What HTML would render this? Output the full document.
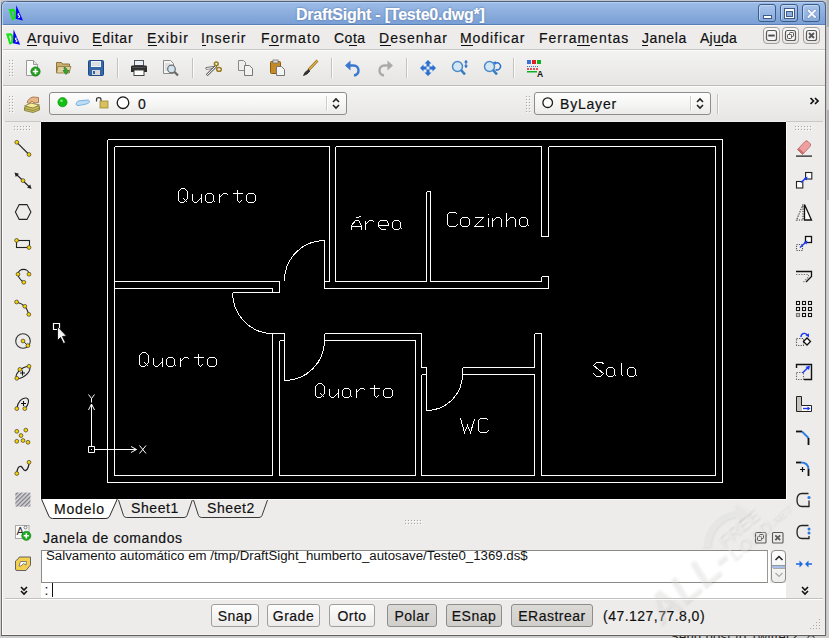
<!DOCTYPE html>
<html><head><meta charset="utf-8">
<style>
*{margin:0;padding:0;box-sizing:border-box}
html,body{width:829px;height:638px;overflow:hidden;background:#9a9a9a;font-family:"Liberation Sans",sans-serif;position:relative}
.a{position:absolute}
.ui{position:absolute;font-size:14px;letter-spacing:0.6px;color:#101010;white-space:nowrap;line-height:16px;-webkit-text-stroke:0.18px currentColor}
.ul{position:absolute;height:1px;background:#101010}
.tb{position:absolute;width:1px;background:#c4c2bf;box-shadow:1px 0 0 #fafafa}
svg{position:absolute;overflow:visible}
.wb{width:18px;height:18px;border:1px solid #3e5b88;border-radius:3px;background:linear-gradient(#a9c5ec,#86a9dc);box-shadow:inset 1px 1px 0 #c2d6f3}
.combo{border:1px solid #8e8c88;border-radius:3px;background:linear-gradient(#fefefe,#f4f4f3 60%,#ebebea)}
.sb{height:23px;padding-top:1px;border:1px solid #a19f9b;border-radius:3px;background:linear-gradient(#fdfdfd,#ecebea);font-size:14px;letter-spacing:0.5px;color:#111;text-align:center;line-height:21px;white-space:nowrap;-webkit-text-stroke:0.18px #111}
.sb.on{background:linear-gradient(#dcdad7,#d0cecb);border-color:#8f8d89}
.mdi{width:17px;height:17px;border:1px solid #9c9a96;border-radius:3px;background:linear-gradient(#fdfdfd,#e3e2e0)}
</style></head><body>
<!-- desktop bits -->
<div class="a" style="left:0;top:0;width:829px;height:2px;background:#c2c6cc"></div>
<div class="a" style="left:0;top:0;width:1px;height:638px;background:#d0d0d0"></div>
<div class="a" style="left:826px;top:0;width:3px;height:638px;background:#d0d0d0"></div>
<div class="a" style="left:826px;top:0;width:3px;height:27px;background:#a9b1bd"></div>
<div class="a" style="left:826px;top:110px;width:3px;height:90px;background:#b0b0b0"></div>
<div class="a" style="left:826px;top:0;width:1px;height:638px;background:#c4c4c4"></div>
<div class="a" style="left:0;top:635px;width:829px;height:3px;background:#cdcdcd"></div>
<div class="a" style="left:670px;top:629px;font-size:13px;line-height:16px;color:#222;white-space:nowrap;letter-spacing:0.3px">Send post to Twitter?</div><div class="a" style="left:807px;top:635px;width:8px;height:8px;border-radius:50%;border:1px solid #333"></div>
<!-- window frame -->
<div class="a" style="left:1px;top:1px;width:825px;height:635px;background:#edeceb;border-left:1px solid #6e6b68;border-right:1px solid #6e6b68;border-bottom:1px solid #625f5c;border-radius:5px 5px 0 0;box-shadow:inset 1px 0 0 #fdfdfd, inset 0 -1px 0 #f6f5f4"></div>
<!-- title bar -->
<div class="a" style="left:1px;top:1px;width:825px;height:24px;border-radius:5px 5px 0 0;box-shadow:inset 1px 0 0 #4b6184,inset -1px 0 0 #4b6184,inset 2px 0 0 #b6cff2;background:linear-gradient(#4b6184 0,#4b6184 1px,#b6cff2 1px,#b6cff2 2px,#9cbbe6 2px,#7a9fd5 23px,#5a7fb6 23px,#5a7fb6 24px)"></div>
<div class="ui" style="left:296px;top:7px;font-weight:bold;font-size:16px;letter-spacing:-0.22px;color:#fff;text-shadow:0 0 2px #3e5f90">DraftSight - [Teste0.dwg*]</div>


<!-- DS logo title -->
<svg style="left:7px;top:4px" width="18" height="18" viewBox="0 0 18 18">
<path d="M9.3 1.2L16 16.6L8.4 14.8Z" fill="#0808f4"/>
<path d="M1.6 5.2L6.2 4.8Q8.6 5.2 8.8 9L8.6 14.6L5.2 16.4Z" fill="#14e414"/>
<path d="M4.6 7.4L6 7.2Q6.9 7.8 6.9 9.8L6.7 13.2L6.2 13.6Z" fill="#7f9fd0"/>
<path d="M12.2 9.8c-1.3 -0.2 -1.6 1.3 -0.4 1.7c1.3 0.4 1 2.1 -0.6 1.9" stroke="#fff" stroke-width="1.1" fill="none"/>
</svg>
<!-- window buttons -->
<div class="a wb" style="left:758px;top:4px"><div class="a" style="left:4px;top:10px;width:9px;height:4px;background:#fff;border:1px solid #3e5b88"></div></div>
<div class="a wb" style="left:780px;top:4px"><div class="a" style="left:3px;top:3px;width:11px;height:11px;border:1px solid #3e5b88;background:#fff"><div class="a" style="left:1px;top:2px;width:7px;height:6px;background:#8aaedf;border:1px solid #3e5b88"></div></div></div>
<div class="a wb" style="left:802px;top:4px"><svg style="left:0;top:0" width="18" height="18" viewBox="0 0 18 18"><path d="M5.5 5.5L12 12M12 5.5L5.5 12" stroke="#6f8fc0" stroke-width="3.4" stroke-linecap="round"/><path d="M5.5 5.5L12 12M12 5.5L5.5 12" stroke="#f2f5fb" stroke-width="2.2" stroke-linecap="round"/></svg></div>
<!-- DS logo menu -->
<svg style="left:5px;top:29px" width="18" height="18" viewBox="0 0 18 18">
<path d="M8.6 0.6L15.2 15.8L7.8 14.2Z" fill="#0808f4"/>
<path d="M1 4.6L5.6 4.2Q8 4.6 8.2 8.4L8 14L4.6 15.8Z" fill="#14e414"/>
<path d="M4 6.8L5.4 6.6Q6.3 7.2 6.3 9.2L6.1 12.6L5.6 13Z" fill="#e4e4e0"/>
<path d="M11.6 9.2c-1.3 -0.2 -1.6 1.3 -0.4 1.7c1.3 0.4 1 2.1 -0.6 1.9" stroke="#fff" stroke-width="1.1" fill="none"/>
</svg>
<!-- MDI buttons -->
<svg style="left:763px;top:27px" width="60" height="18" viewBox="0 0 60 18">
<defs><linearGradient id="mg" x1="0" y1="0" x2="0" y2="1"><stop offset="0" stop-color="#fdfdfd"/><stop offset="1" stop-color="#e6e5e3"/></linearGradient></defs>
<g transform="translate(0,0)"><rect x="0.5" y="0.5" width="16" height="16" rx="3.5" fill="url(#mg)" stroke="#a19f9b"/><rect x="3.5" y="3.5" width="10" height="10" rx="2" fill="#f6f6f6" stroke="#5c5a58" stroke-width="1.2"/><rect x="5.3" y="7.6" width="6.4" height="1.9" fill="#4a4a4a"/></g>
<g transform="translate(19,0)"><rect x="0.5" y="0.5" width="16" height="16" rx="3.5" fill="url(#mg)" stroke="#a19f9b"/><rect x="3.5" y="3.5" width="10" height="10" rx="2" fill="#f6f6f6" stroke="#5c5a58" stroke-width="1.2"/><rect x="7.5" y="5.5" width="4" height="4" rx="0.8" fill="none" stroke="#555" stroke-width="1"/><rect x="5.5" y="7.5" width="4" height="4" rx="0.8" fill="#f6f6f6" stroke="#555" stroke-width="1"/></g>
<g transform="translate(40,0)"><rect x="0.5" y="0.5" width="16" height="16" rx="3.5" fill="url(#mg)" stroke="#a19f9b"/><rect x="3.5" y="3.5" width="10" height="10" rx="2" fill="#f6f6f6" stroke="#5c5a58" stroke-width="1.2"/><path d="M6 6L11 11M11 6L6 11" stroke="#555" stroke-width="1.9"/></g>
</svg>
<!-- menu bar -->
<div class="a" style="left:3px;top:25px;width:822px;height:1px;background:#f7f6f4"></div>
<div class="a" style="left:3px;top:49px;width:822px;height:1px;background:#c9c7c3"></div>

<div class="ui" style="left:27px;top:30px;letter-spacing:0.77px">Arquivo</div><div class="ul" style="left:27px;top:45px;width:10px"></div>
<div class="ui" style="left:92px;top:30px;letter-spacing:0.8px">Editar</div><div class="ul" style="left:93px;top:45px;width:9px"></div>
<div class="ui" style="left:147px;top:30px;letter-spacing:1.2px">Exibir</div><div class="ul" style="left:148px;top:45px;width:9px"></div>
<div class="ui" style="left:201px;top:30px;letter-spacing:0.93px">Inserir</div><div class="ul" style="left:202px;top:45px;width:4px"></div>
<div class="ui" style="left:261px;top:30px;letter-spacing:1.1px">Formato</div><div class="ul" style="left:269px;top:45px;width:10px"></div>
<div class="ui" style="left:334px;top:30px;letter-spacing:0.5px">Cota</div><div class="ul" style="left:349px;top:45px;width:8px"></div>
<div class="ui" style="left:379px;top:30px;letter-spacing:1.03px">Desenhar</div><div class="ul" style="left:380px;top:45px;width:11px"></div>
<div class="ui" style="left:460px;top:30px;letter-spacing:0.94px">Modificar</div><div class="ul" style="left:461px;top:45px;width:12px"></div>
<div class="ui" style="left:539px;top:30px;letter-spacing:1.0px">Ferramentas</div><div class="ul" style="left:577px;top:45px;width:13px"></div>
<div class="ui" style="left:642px;top:30px;letter-spacing:0.6px">Janela</div><div class="ul" style="left:642px;top:45px;width:6px"></div>
<div class="ui" style="left:700px;top:30px;letter-spacing:0.25px">Ajuda</div><div class="ul" style="left:715px;top:45px;width:8px"></div>

<!-- toolbar 1 -->
<div class="a" style="left:3px;top:50px;width:822px;height:36px;background:linear-gradient(#fbfbfb 0,#fbfbfb 1px,#f3f3f2 1px,#e6e5e3 35px,#bebcb9 35px)"></div>

<!-- toolbar1 grip -->

<!-- new -->
<svg style="left:24px;top:59px" width="18" height="18" viewBox="0 0 18 18">
<path d="M2.5 1.5H9.5L13.5 5.5V16.5H2.5Z" fill="#fafafa" stroke="#9a9a9a"/><path d="M9.5 1.5V5.5H13.5" fill="#e0e0e0" stroke="#9a9a9a"/>
<circle cx="11.5" cy="12.5" r="4.6" fill="#22a022" stroke="#0f7a0f" stroke-width="0.8"/><path d="M11.5 9.8V15.2M8.8 12.5H14.2" stroke="#fff" stroke-width="1.7"/></svg>
<!-- open -->
<svg style="left:55px;top:59px" width="18" height="18" viewBox="0 0 18 18">
<path d="M1.5 3.5H6.5L7.5 5H14.5V13.5H1.5Z" fill="#c9b073" stroke="#8e7437"/><path d="M3 7.5H16L14 14H1.5Z" fill="#e2d0a0" stroke="#8e7437" stroke-width="0.8"/>
<path d="M9 8.5C11 8.5 12 9.5 12 11.5H14L11 15.5L8 11.5H10C10 10.5 9.5 10 9 10Z" fill="#3aa63a" stroke="#1d7a1d" stroke-width="0.7"/></svg>
<!-- save -->
<svg style="left:87px;top:59px" width="18" height="18" viewBox="0 0 18 18">
<rect x="1.5" y="1.5" width="15" height="15" rx="1" fill="#3466a8" stroke="#1f4a82"/><rect x="4" y="2" width="10" height="6" fill="#f0f0f0"/><path d="M5 4H13M5 6H13" stroke="#b8c4d4" stroke-width="0.8"/><rect x="5" y="11" width="8" height="5" fill="#d8d8d8"/><rect x="6" y="12" width="2" height="3" fill="#3466a8"/></svg>
<div class="tb" style="left:117px;top:58px;height:20px"></div>
<!-- print -->
<svg style="left:130px;top:59px" width="18" height="18" viewBox="0 0 18 18">
<rect x="4.5" y="1.5" width="9" height="5" fill="#e8eef8" stroke="#555"/><path d="M2 6.5H16Q17 6.5 17 8V13H1V8Q1 6.5 2 6.5Z" fill="#2c2c2c"/><rect x="4" y="11" width="10" height="5.5" fill="#fff" stroke="#444"/><rect x="2.5" y="8" width="13" height="1" fill="#555"/></svg>
<!-- preview -->
<svg style="left:162px;top:59px" width="18" height="18" viewBox="0 0 18 18">
<path d="M1.5 1.5H8.5L11.5 4.5V14.5H1.5Z" fill="#f5f5f5" stroke="#8a8a8a"/><path d="M3 5H8M3 7H7M3 9H6M3 11H6" stroke="#bbb" stroke-width="0.8"/>
<circle cx="9.5" cy="10" r="3.8" fill="#cfe4ef" stroke="#6a6a6a" stroke-width="1.2"/><path d="M12.3 12.8L16 16.5" stroke="#666" stroke-width="2.2"/></svg>
<div class="tb" style="left:192px;top:58px;height:20px"></div>
<!-- cut -->
<svg style="left:205px;top:59px" width="18" height="18" viewBox="0 0 18 18">
<path d="M1.8 9.3L8.6 8.6" stroke="#444" stroke-width="2.6" stroke-linecap="round"/><path d="M1.8 9.3L8.6 8.6" stroke="#fafafa" stroke-width="1.3" stroke-linecap="round"/>
<path d="M2.6 15.4L10.8 7.4" stroke="#333" stroke-width="2.6" stroke-linecap="round"/><path d="M2.6 15.4L10.8 7.4" stroke="#fafafa" stroke-width="1.2" stroke-linecap="round"/>
<circle cx="11.3" cy="4.8" r="1.9" fill="none" stroke="#9a7b1e" stroke-width="1.5"/><ellipse cx="14" cy="10.4" rx="2.3" ry="1.8" fill="none" stroke="#9a7b1e" stroke-width="1.5"/></svg>
<!-- copy -->
<svg style="left:237px;top:59px" width="18" height="18" viewBox="0 0 18 18">
<path d="M1.5 1.5H6.5L8.5 3.5V11.5H1.5Z" fill="#eee" stroke="#888"/><path d="M7.5 6.5H12.5L15.5 9.5V16.5H7.5Z" fill="#f2f2f2" stroke="#777"/></svg>
<!-- paste -->
<svg style="left:269px;top:59px" width="18" height="18" viewBox="0 0 18 18">
<rect x="1.5" y="2.5" width="10" height="12" rx="1" fill="#c48a28" stroke="#8a5a10"/><rect x="4" y="1" width="5" height="3" fill="#ddd" stroke="#777" stroke-width="0.8"/><path d="M7.5 7.5H12.5L15.5 10.5V16.5H7.5Z" fill="#f4f4f4" stroke="#777"/></svg>
<!-- brush -->
<svg style="left:302px;top:59px" width="18" height="18" viewBox="0 0 18 18">
<path d="M15.5 1.5L6.5 11" stroke="#8a6a1a" stroke-width="2.6"/><path d="M15.5 1.5L6.5 11" stroke="#e6b64a" stroke-width="1.2"/><path d="M6.8 10.2L3 13.5L1.5 16.5L5 15L8 12" fill="#333" stroke="#222" stroke-width="0.8"/></svg>
<div class="tb" style="left:331px;top:58px;height:20px"></div>
<!-- undo -->
<svg style="left:344px;top:59px" width="18" height="18" viewBox="0 0 18 18">
<path d="M5 6.5H9.5C13 6.5 14.5 9 14.5 11.5C14.5 14 12.5 16 10 16.5" stroke="#3a78d0" stroke-width="2.4" fill="none"/><path d="M1 6.5L6.5 1.5V11.5Z" fill="#3a78d0"/></svg>
<!-- redo -->
<svg style="left:376px;top:59px" width="18" height="18" viewBox="0 0 18 18">
<path d="M13 6.5H8.5C5 6.5 3.5 9 3.5 11.5C3.5 14 5.5 16 8 16.5" stroke="#aaa" stroke-width="2.4" fill="none"/><path d="M17 6.5L11.5 1.5V11.5Z" fill="#aaa"/></svg>
<div class="tb" style="left:406px;top:58px;height:20px"></div>
<!-- pan -->
<svg style="left:419px;top:59px" width="18" height="18" viewBox="0 0 18 18">
<path d="M9 1L12.5 4.5H10.5V7.5H13.5V5.5L17 9L13.5 12.5V10.5H10.5V13.5H12.5L9 17L5.5 13.5H7.5V10.5H4.5V12.5L1 9L4.5 5.5V7.5H7.5V4.5H5.5Z" fill="#2a6fd0"/><rect x="7.5" y="7.5" width="3" height="3" fill="#d8e6f6"/></svg>
<!-- zoom -->
<svg style="left:451px;top:59px" width="18" height="18" viewBox="0 0 18 18">
<circle cx="6.5" cy="7.5" r="5" fill="#d4e6f4" stroke="#4b8cc8" stroke-width="1.5"/><path d="M10 11L14 15.5" stroke="#3a7ac0" stroke-width="2.6"/><path d="M15 1.5V8.5" stroke="#2a6fd0" stroke-width="1.2"/><path d="M13 3.5L15 1L17 3.5ZM13 6.5L15 9L17 6.5Z" fill="#2a6fd0"/></svg>
<!-- zoom prev -->
<svg style="left:483px;top:59px" width="18" height="18" viewBox="0 0 18 18">
<circle cx="6.5" cy="7.5" r="5" fill="#d4e6f4" stroke="#4b8cc8" stroke-width="1.5"/><path d="M10 11L14 15.5" stroke="#3a7ac0" stroke-width="2.6"/><path d="M12 4.5A3.5 3.5 0 1 1 12.5 10.5" stroke="#2a6fd0" stroke-width="1.4" fill="none"/><path d="M10 3L13 2.5L12.5 6Z" fill="#2a6fd0"/></svg>
<div class="tb" style="left:513px;top:58px;height:20px"></div>
<!-- layer styles -->
<svg style="left:526px;top:59px" width="18" height="18" viewBox="0 0 18 18">
<rect x="1" y="1" width="4" height="4" fill="#3a70d8"/><rect x="6" y="1" width="4" height="4" fill="#e02020"/><rect x="11" y="1" width="4" height="4" fill="#10b020"/>
<path d="M1 7.5H12" stroke="#3a70d8" stroke-width="1" stroke-dasharray="1 1"/><path d="M1 10H12" stroke="#e02020" stroke-width="1.3" stroke-dasharray="2 1"/><rect x="1" y="12" width="10" height="1.5" fill="#10b020"/>
<text x="11" y="17.5" font-family="Liberation Sans" font-weight="bold" font-size="8.5" fill="#111">A</text></svg>

<!-- toolbar 2 -->
<div class="a" style="left:3px;top:86px;width:822px;height:36px;background:linear-gradient(#fbfbfb 0,#fbfbfb 1px,#f3f3f2 1px,#e7e6e4 35px,#eeedeb 35px)"></div>


<!-- toolbar2 grip -->

<!-- layer manager icon -->
<svg style="left:23px;top:95px" width="18" height="18" viewBox="0 0 18 18">
<path d="M1.5 12.5L8 9.5L16.5 11.5V15L10 17.5L1.5 15.5Z" fill="#c8c060" stroke="#7a7030" stroke-width="0.8"/><path d="M1.5 11L8 8L16.5 10L10 13L1.5 11Z" fill="#f4ec9a" stroke="#7a7030" stroke-width="0.8"/><path d="M1.5 13.5L10 15.5L16.5 13" stroke="#7a7030" stroke-width="0.7" fill="none"/>
<path d="M4 7.5C5 5 7 2.5 10 2L15.5 2.5V7.5L11 8L9 6L6 8.5Z" fill="#e8b888" stroke="#a06838" stroke-width="0.8"/></svg>
<!-- layer combo -->
<div class="a combo" style="left:49px;top:92px;width:298px;height:23px"></div>
<div class="a" style="left:326px;top:96px;width:1px;height:15px;background:#cfcdca;box-shadow:1px 0 0 #fff"></div>
<svg style="left:331px;top:97px" width="10" height="13" viewBox="0 0 10 13"><path d="M2 5L5 2L8 5M2 8L5 11L8 8" stroke="#222" stroke-width="1.6" fill="none"/></svg>
<svg style="left:55px;top:94px" width="90" height="18" viewBox="0 0 90 18">
<circle cx="7.5" cy="8.2" r="4.6" fill="#10c010" stroke="#0a8a0a" stroke-width="0.6"/><circle cx="6.5" cy="6.8" r="1.4" fill="#9fef9f" opacity="0.8"/>
<path d="M21.5 8.5C22.5 6.5 25 6.8 28 6.5C31 6.2 34 5.5 34.5 7C35 9 32 10 29 10.5C26 11 22 12.5 21 10.5Z" fill="#bcdcf4" stroke="#6aaae0" stroke-width="0.9"/>
<path d="M41.5 7.5V5.5C41.5 3 46 3 46 5.5V7.5" stroke="#333" stroke-width="1.2" fill="none"/><rect x="45" y="7" width="8" height="7" fill="#d8c060" stroke="#9a8a30" stroke-width="0.8"/>
<circle cx="68" cy="8.7" r="5.8" fill="#fff" stroke="#1a1a1a" stroke-width="1.3"/></svg>
<div class="ui" style="left:138px;top:96px">0</div>
<!-- second grip -->

<div class="a combo" style="left:534px;top:92px;width:177px;height:23px"></div>
<div class="a" style="left:690px;top:96px;width:1px;height:15px;background:#cfcdca;box-shadow:1px 0 0 #fff"></div>
<svg style="left:695px;top:97px" width="10" height="13" viewBox="0 0 10 13"><path d="M2 5L5 2L8 5M2 8L5 11L8 8" stroke="#222" stroke-width="1.6" fill="none"/></svg>
<svg style="left:540px;top:95px" width="16" height="16"><circle cx="7.7" cy="7.7" r="4.8" fill="#fff" stroke="#1a1a1a" stroke-width="1.3"/></svg>
<div class="ui" style="left:560px;top:96px;letter-spacing:0.8px">ByLayer</div>
<div class="tb" style="left:717px;top:94px;height:20px"></div>
<svg style="left:809px;top:95px" width="12" height="12" viewBox="0 0 12 12"><path d="M1.5 3L4.5 6L1.5 9M6 3L9 6L6 9" stroke="#111" stroke-width="1.7" fill="none"/></svg>

<!-- drawing area -->
<div class="a" style="left:40px;top:122px;width:747px;height:378px;background:#fbfbfb"></div>
<div class="a" style="left:5px;top:121px;width:36px;height:1px;background:#c9c8c5"></div>
<div class="a" style="left:786px;top:121px;width:37px;height:1px;background:#c9c8c5"></div>
<div class="a" style="left:41px;top:122px;width:745px;height:377px;background:#000"></div>

<svg class="a" style="left:0;top:0" width="829" height="638" viewBox="0 0 829 638">
<path d="M114.5 146.5L329.5 146.5M114.5 146.5L114.5 475.5M329.5 146.5L329.5 281.5M324.5 281.5L329.5 281.5M324.5 240.5L324.5 288.5M114.5 281.5L279.5 281.5M279.5 281.5L279.5 292.5M232.5 292.5L279.5 292.5M114.5 288.5L272.5 288.5M272.5 288.5L272.5 292.5M272.5 333.5L284.5 333.5M272.5 333.5L272.5 475.5M284.5 333.5L284.5 380.5M279.5 340.5L279.5 475.5M279.5 340.5L284.5 340.5M324.5 333.5L324.5 340.5M324.5 333.5L421.5 333.5M324.5 340.5L415.5 340.5M415.5 340.5L415.5 475.5M421.5 333.5L421.5 367.5M421.5 367.5L426.5 367.5M426.5 367.5L426.5 410.5M421.5 374.5L426.5 374.5M421.5 374.5L421.5 475.5M462.5 367.5L462.5 374.5M462.5 367.5L534.5 367.5M462.5 374.5L534.5 374.5M534.5 333.5L534.5 367.5M534.5 374.5L534.5 475.5M534.5 333.5L541.5 333.5M541.5 333.5L541.5 475.5M335.5 146.5L541.5 146.5M335.5 146.5L335.5 281.5M335.5 281.5L426.5 281.5M426.5 191.5L426.5 281.5M426.5 191.5L430.5 191.5M430.5 191.5L430.5 281.5M430.5 281.5L541.5 281.5M541.5 146.5L541.5 236.5M541.5 236.5L548.5 236.5M548.5 146.5L548.5 236.5M541.5 276.5L541.5 281.5M541.5 276.5L548.5 276.5M548.5 276.5L548.5 288.5M324.5 288.5L548.5 288.5M548.5 146.5L715.5 146.5M715.5 146.5L715.5 475.5M114.5 475.5L272.5 475.5M279.5 475.5L415.5 475.5M421.5 475.5L534.5 475.5M541.5 475.5L715.5 475.5M107.5 139.5L722.5 139.5M107.5 139.5L107.5 482.5M722.5 139.5L722.5 482.5M107.5 482.5L722.5 482.5" stroke="#fff" stroke-width="1" fill="none" shape-rendering="crispEdges"/>
<path d="M284.5 280.5A40 40 0 0 1 324.5 240.5M232.5 292.5A40 41 0 0 0 272.5 333.5M284.5 380.5A40 40 0 0 0 324.5 340.5M426.5 410.5A36 36 0 0 0 462.5 374.5" stroke="#fff" stroke-width="1" fill="none" shape-rendering="crispEdges"/>
<path d="M181.5 188.5L184.5 188.5 187.5 191.5 187.5 198.5 183.5 202.5 180.5 202.5 178.5 200.5 178.5 191.5 181.5 188.5M183.5 198.5L187.5 202.5M192.5 193.5L192.5 200.5 194.5 202.5 196.5 202.5 201.5 197.5M201.5 193.5L201.5 202.5M207.5 193.5L211.5 193.5 213.5 195.5 213.5 200.5 211.5 202.5 207.5 202.5 205.5 200.5 205.5 195.5 207.5 193.5M213.5 200.5L215.5 202.5M219.5 193.5L219.5 202.5M219.5 197.5L223.5 193.5 226.5 193.5 228.5 195.5M237.5 189.5L237.5 200.5 239.5 202.5 241.5 200.5M232.5 193.5L242.5 193.5M248.5 193.5L253.5 193.5 255.5 195.5 255.5 200.5 253.5 202.5 248.5 202.5 246.5 200.5 246.5 195.5 248.5 193.5M142.5 352.5L145.5 352.5 148.5 355.5 148.5 362.5 144.5 366.5 141.5 366.5 139.5 364.5 139.5 355.5 142.5 352.5M144.5 362.5L148.5 366.5M153.5 357.5L153.5 364.5 155.5 366.5 157.5 366.5 162.5 361.5M162.5 357.5L162.5 366.5M168.5 357.5L172.5 357.5 174.5 359.5 174.5 364.5 172.5 366.5 168.5 366.5 166.5 364.5 166.5 359.5 168.5 357.5M174.5 364.5L176.5 366.5M180.5 357.5L180.5 366.5M180.5 361.5L184.5 357.5 187.5 357.5 189.5 359.5M198.5 353.5L198.5 364.5 200.5 366.5 202.5 364.5M193.5 357.5L203.5 357.5M209.5 357.5L214.5 357.5 216.5 359.5 216.5 364.5 214.5 366.5 209.5 366.5 207.5 364.5 207.5 359.5 209.5 357.5M318.5 383.5L321.5 383.5 324.5 386.5 324.5 393.5 320.5 397.5 317.5 397.5 315.5 395.5 315.5 386.5 318.5 383.5M320.5 393.5L324.5 397.5M329.5 388.5L329.5 395.5 331.5 397.5 333.5 397.5 338.5 392.5M338.5 388.5L338.5 397.5M344.5 388.5L348.5 388.5 350.5 390.5 350.5 395.5 348.5 397.5 344.5 397.5 342.5 395.5 342.5 390.5 344.5 388.5M350.5 395.5L352.5 397.5M356.5 388.5L356.5 397.5M356.5 392.5L360.5 388.5 363.5 388.5 365.5 390.5M374.5 384.5L374.5 395.5 376.5 397.5 378.5 395.5M369.5 388.5L379.5 388.5M385.5 388.5L390.5 388.5 392.5 390.5 392.5 395.5 390.5 397.5 385.5 397.5 383.5 395.5 383.5 390.5 385.5 388.5M351.5 229.5L351.5 225.5 355.5 220.5 358.5 220.5 361.5 225.5 361.5 229.5M351.5 226.5L361.5 226.5M355.5 217.5L358.5 217.5 361.5 215.5M365.5 220.5L365.5 229.5M365.5 224.5L369.5 220.5 372.5 220.5 374.5 222.5M378.5 225.5L388.5 225.5 388.5 223.5 386.5 220.5 380.5 220.5 378.5 222.5 378.5 226.5 381.5 229.5 385.5 229.5M394.5 220.5L398.5 220.5 400.5 222.5 400.5 227.5 398.5 229.5 394.5 229.5 392.5 227.5 392.5 222.5 394.5 220.5M400.5 227.5L402.5 229.5M457.5 214.5L455.5 212.5 449.5 212.5 447.5 214.5 447.5 224.5 449.5 226.5 455.5 226.5 457.5 224.5M462.5 217.5L467.5 217.5 469.5 219.5 469.5 224.5 467.5 226.5 462.5 226.5 460.5 224.5 460.5 219.5 462.5 217.5M474.5 217.5L483.5 217.5 474.5 226.5 483.5 226.5M488.5 217.5L488.5 226.5M488.5 213.5L488.5 214.5M492.5 217.5L492.5 226.5M492.5 221.5L496.5 217.5 499.5 217.5 501.5 219.5 501.5 226.5M506.5 212.5L506.5 226.5M506.5 221.5L510.5 217.5 513.5 217.5 515.5 219.5 515.5 226.5M521.5 217.5L525.5 217.5 527.5 219.5 527.5 224.5 525.5 226.5 521.5 226.5 519.5 224.5 519.5 219.5 521.5 217.5M527.5 224.5L529.5 226.5M603.5 364.5L602.5 362.5 596.5 362.5 593.5 365.5 603.5 373.5 600.5 376.5 596.5 376.5 593.5 373.5M608.5 367.5L612.5 367.5 614.5 369.5 614.5 374.5 612.5 376.5 608.5 376.5 606.5 374.5 606.5 369.5 608.5 367.5M614.5 374.5L616.5 376.5M621.5 362.5L621.5 374.5 623.5 376.5M629.5 367.5L633.5 367.5 635.5 369.5 635.5 374.5 633.5 376.5 629.5 376.5 627.5 374.5 627.5 369.5 629.5 367.5M635.5 374.5L637.5 376.5M460.5 418.5L464.5 432.5 467.5 425.5 470.5 432.5 474.5 419.5M488.5 420.5L486.5 418.5 480.5 418.5 478.5 420.5 478.5 430.5 480.5 432.5 486.5 432.5 488.5 430.5" stroke="#fff" stroke-width="1" fill="none" shape-rendering="crispEdges"/>
<path d="M91.5 446.5V404M88.5 410L91.5 404L94.5 410M94.5 449.5H136.5M131 446.5L136.5 449.5L131 452.5M88.5 446.5h6v6h-6zM139.5 445.5L146 453.5M146 445.5L139.5 453.5M88.5 394.5L91.5 398.5L94.5 394.5M91.5 398.5V402.5" stroke="#fff" stroke-width="1" fill="none"/>
<rect x="91" y="449" width="1" height="1" fill="#fff"/>
<path d="M53.5 323.5h6v6h-6z" stroke="#fff" stroke-width="1.2" fill="none"/>
<path d="M57.5 326.5V340.5L60.5 337.5L63.5 343.5L65.5 342.5L62.5 336.5L66.5 336Z" fill="#f4f4f4" stroke="#000" stroke-width="0.8"/>
</svg>
<!-- grips -->
<svg style="left:9px;top:60px" width="6" height="18"><rect x="1" y="1" width="1" height="1" fill="#fff"/><rect x="0" y="0" width="1" height="1" fill="#a9a7a3"/><rect x="1" y="4" width="1" height="1" fill="#fff"/><rect x="0" y="3" width="1" height="1" fill="#a9a7a3"/><rect x="1" y="7" width="1" height="1" fill="#fff"/><rect x="0" y="6" width="1" height="1" fill="#a9a7a3"/><rect x="1" y="10" width="1" height="1" fill="#fff"/><rect x="0" y="9" width="1" height="1" fill="#a9a7a3"/><rect x="1" y="13" width="1" height="1" fill="#fff"/><rect x="0" y="12" width="1" height="1" fill="#a9a7a3"/><rect x="1" y="16" width="1" height="1" fill="#fff"/><rect x="0" y="15" width="1" height="1" fill="#a9a7a3"/><rect x="4" y="1" width="1" height="1" fill="#fff"/><rect x="3" y="0" width="1" height="1" fill="#a9a7a3"/><rect x="4" y="4" width="1" height="1" fill="#fff"/><rect x="3" y="3" width="1" height="1" fill="#a9a7a3"/><rect x="4" y="7" width="1" height="1" fill="#fff"/><rect x="3" y="6" width="1" height="1" fill="#a9a7a3"/><rect x="4" y="10" width="1" height="1" fill="#fff"/><rect x="3" y="9" width="1" height="1" fill="#a9a7a3"/><rect x="4" y="13" width="1" height="1" fill="#fff"/><rect x="3" y="12" width="1" height="1" fill="#a9a7a3"/><rect x="4" y="16" width="1" height="1" fill="#fff"/><rect x="3" y="15" width="1" height="1" fill="#a9a7a3"/></svg>
<svg style="left:9px;top:96px" width="6" height="18"><rect x="1" y="1" width="1" height="1" fill="#fff"/><rect x="0" y="0" width="1" height="1" fill="#a9a7a3"/><rect x="1" y="4" width="1" height="1" fill="#fff"/><rect x="0" y="3" width="1" height="1" fill="#a9a7a3"/><rect x="1" y="7" width="1" height="1" fill="#fff"/><rect x="0" y="6" width="1" height="1" fill="#a9a7a3"/><rect x="1" y="10" width="1" height="1" fill="#fff"/><rect x="0" y="9" width="1" height="1" fill="#a9a7a3"/><rect x="1" y="13" width="1" height="1" fill="#fff"/><rect x="0" y="12" width="1" height="1" fill="#a9a7a3"/><rect x="1" y="16" width="1" height="1" fill="#fff"/><rect x="0" y="15" width="1" height="1" fill="#a9a7a3"/><rect x="4" y="1" width="1" height="1" fill="#fff"/><rect x="3" y="0" width="1" height="1" fill="#a9a7a3"/><rect x="4" y="4" width="1" height="1" fill="#fff"/><rect x="3" y="3" width="1" height="1" fill="#a9a7a3"/><rect x="4" y="7" width="1" height="1" fill="#fff"/><rect x="3" y="6" width="1" height="1" fill="#a9a7a3"/><rect x="4" y="10" width="1" height="1" fill="#fff"/><rect x="3" y="9" width="1" height="1" fill="#a9a7a3"/><rect x="4" y="13" width="1" height="1" fill="#fff"/><rect x="3" y="12" width="1" height="1" fill="#a9a7a3"/><rect x="4" y="16" width="1" height="1" fill="#fff"/><rect x="3" y="15" width="1" height="1" fill="#a9a7a3"/></svg>
<svg style="left:526px;top:96px" width="6" height="18"><rect x="1" y="1" width="1" height="1" fill="#fff"/><rect x="0" y="0" width="1" height="1" fill="#a9a7a3"/><rect x="1" y="4" width="1" height="1" fill="#fff"/><rect x="0" y="3" width="1" height="1" fill="#a9a7a3"/><rect x="1" y="7" width="1" height="1" fill="#fff"/><rect x="0" y="6" width="1" height="1" fill="#a9a7a3"/><rect x="1" y="10" width="1" height="1" fill="#fff"/><rect x="0" y="9" width="1" height="1" fill="#a9a7a3"/><rect x="1" y="13" width="1" height="1" fill="#fff"/><rect x="0" y="12" width="1" height="1" fill="#a9a7a3"/><rect x="1" y="16" width="1" height="1" fill="#fff"/><rect x="0" y="15" width="1" height="1" fill="#a9a7a3"/><rect x="4" y="1" width="1" height="1" fill="#fff"/><rect x="3" y="0" width="1" height="1" fill="#a9a7a3"/><rect x="4" y="4" width="1" height="1" fill="#fff"/><rect x="3" y="3" width="1" height="1" fill="#a9a7a3"/><rect x="4" y="7" width="1" height="1" fill="#fff"/><rect x="3" y="6" width="1" height="1" fill="#a9a7a3"/><rect x="4" y="10" width="1" height="1" fill="#fff"/><rect x="3" y="9" width="1" height="1" fill="#a9a7a3"/><rect x="4" y="13" width="1" height="1" fill="#fff"/><rect x="3" y="12" width="1" height="1" fill="#a9a7a3"/><rect x="4" y="16" width="1" height="1" fill="#fff"/><rect x="3" y="15" width="1" height="1" fill="#a9a7a3"/></svg>
<svg style="left:14px;top:126px" width="18" height="6"><rect x="1" y="1" width="1" height="1" fill="#fff"/><rect x="0" y="0" width="1" height="1" fill="#a9a7a3"/><rect x="1" y="4" width="1" height="1" fill="#fff"/><rect x="0" y="3" width="1" height="1" fill="#a9a7a3"/><rect x="4" y="1" width="1" height="1" fill="#fff"/><rect x="3" y="0" width="1" height="1" fill="#a9a7a3"/><rect x="4" y="4" width="1" height="1" fill="#fff"/><rect x="3" y="3" width="1" height="1" fill="#a9a7a3"/><rect x="7" y="1" width="1" height="1" fill="#fff"/><rect x="6" y="0" width="1" height="1" fill="#a9a7a3"/><rect x="7" y="4" width="1" height="1" fill="#fff"/><rect x="6" y="3" width="1" height="1" fill="#a9a7a3"/><rect x="10" y="1" width="1" height="1" fill="#fff"/><rect x="9" y="0" width="1" height="1" fill="#a9a7a3"/><rect x="10" y="4" width="1" height="1" fill="#fff"/><rect x="9" y="3" width="1" height="1" fill="#a9a7a3"/><rect x="13" y="1" width="1" height="1" fill="#fff"/><rect x="12" y="0" width="1" height="1" fill="#a9a7a3"/><rect x="13" y="4" width="1" height="1" fill="#fff"/><rect x="12" y="3" width="1" height="1" fill="#a9a7a3"/><rect x="16" y="1" width="1" height="1" fill="#fff"/><rect x="15" y="0" width="1" height="1" fill="#a9a7a3"/><rect x="16" y="4" width="1" height="1" fill="#fff"/><rect x="15" y="3" width="1" height="1" fill="#a9a7a3"/></svg>
<svg style="left:795px;top:126px" width="18" height="6"><rect x="1" y="1" width="1" height="1" fill="#fff"/><rect x="0" y="0" width="1" height="1" fill="#a9a7a3"/><rect x="1" y="4" width="1" height="1" fill="#fff"/><rect x="0" y="3" width="1" height="1" fill="#a9a7a3"/><rect x="4" y="1" width="1" height="1" fill="#fff"/><rect x="3" y="0" width="1" height="1" fill="#a9a7a3"/><rect x="4" y="4" width="1" height="1" fill="#fff"/><rect x="3" y="3" width="1" height="1" fill="#a9a7a3"/><rect x="7" y="1" width="1" height="1" fill="#fff"/><rect x="6" y="0" width="1" height="1" fill="#a9a7a3"/><rect x="7" y="4" width="1" height="1" fill="#fff"/><rect x="6" y="3" width="1" height="1" fill="#a9a7a3"/><rect x="10" y="1" width="1" height="1" fill="#fff"/><rect x="9" y="0" width="1" height="1" fill="#a9a7a3"/><rect x="10" y="4" width="1" height="1" fill="#fff"/><rect x="9" y="3" width="1" height="1" fill="#a9a7a3"/><rect x="13" y="1" width="1" height="1" fill="#fff"/><rect x="12" y="0" width="1" height="1" fill="#a9a7a3"/><rect x="13" y="4" width="1" height="1" fill="#fff"/><rect x="12" y="3" width="1" height="1" fill="#a9a7a3"/><rect x="16" y="1" width="1" height="1" fill="#fff"/><rect x="15" y="0" width="1" height="1" fill="#a9a7a3"/><rect x="16" y="4" width="1" height="1" fill="#fff"/><rect x="15" y="3" width="1" height="1" fill="#a9a7a3"/></svg>
<svg style="left:405px;top:520px" width="18" height="6"><rect x="1" y="1" width="1" height="1" fill="#fff"/><rect x="0" y="0" width="1" height="1" fill="#a9a7a3"/><rect x="1" y="4" width="1" height="1" fill="#fff"/><rect x="0" y="3" width="1" height="1" fill="#a9a7a3"/><rect x="4" y="1" width="1" height="1" fill="#fff"/><rect x="3" y="0" width="1" height="1" fill="#a9a7a3"/><rect x="4" y="4" width="1" height="1" fill="#fff"/><rect x="3" y="3" width="1" height="1" fill="#a9a7a3"/><rect x="7" y="1" width="1" height="1" fill="#fff"/><rect x="6" y="0" width="1" height="1" fill="#a9a7a3"/><rect x="7" y="4" width="1" height="1" fill="#fff"/><rect x="6" y="3" width="1" height="1" fill="#a9a7a3"/><rect x="10" y="1" width="1" height="1" fill="#fff"/><rect x="9" y="0" width="1" height="1" fill="#a9a7a3"/><rect x="10" y="4" width="1" height="1" fill="#fff"/><rect x="9" y="3" width="1" height="1" fill="#a9a7a3"/><rect x="13" y="1" width="1" height="1" fill="#fff"/><rect x="12" y="0" width="1" height="1" fill="#a9a7a3"/><rect x="13" y="4" width="1" height="1" fill="#fff"/><rect x="12" y="3" width="1" height="1" fill="#a9a7a3"/><rect x="16" y="1" width="1" height="1" fill="#fff"/><rect x="15" y="0" width="1" height="1" fill="#a9a7a3"/><rect x="16" y="4" width="1" height="1" fill="#fff"/><rect x="15" y="3" width="1" height="1" fill="#a9a7a3"/></svg>

<!-- docks -->
<svg style="left:14px;top:139px" width="18" height="18" viewBox="0 0 18 18"><path d="M2.8 3.3L15 15.5" stroke="#222" stroke-width="1.1"/><circle cx="2.8" cy="3.3" r="1.9" fill="#f7d400" stroke="#3a3a2a" stroke-width="0.7"/><circle cx="15" cy="15.5" r="1.9" fill="#f7d400" stroke="#3a3a2a" stroke-width="0.7"/></svg>
<svg style="left:14px;top:171px" width="18" height="18" viewBox="0 0 18 18"><path d="M2 3L16 16.5" stroke="#222" stroke-width="1.1"/><path d="M0.5 1.5L5 2.8L1.8 6ZM17.5 18L13 16.5L16.3 13.5Z" fill="#222"/><circle cx="9" cy="9.6" r="1.9" fill="#f7d400" stroke="#3a3a2a" stroke-width="0.7"/></svg>
<svg style="left:14px;top:203px" width="18" height="18" viewBox="0 0 18 18"><path d="M1.4 8.9L5.2 1.6H13L16.9 8.9L13 16.4H5.2Z" fill="none" stroke="#222" stroke-width="1.1"/></svg>
<svg style="left:14px;top:235px" width="18" height="18" viewBox="0 0 18 18"><rect x="2.5" y="5.5" width="13" height="7" fill="none" stroke="#222" stroke-width="1.1"/><circle cx="2.6" cy="5.4" r="1.9" fill="#f7d400" stroke="#3a3a2a" stroke-width="0.7"/><circle cx="15" cy="12.5" r="1.9" fill="#f7d400" stroke="#3a3a2a" stroke-width="0.7"/></svg>
<svg style="left:14px;top:267px" width="18" height="18" viewBox="0 0 18 18"><path d="M9.8 15.3Q4 11 4 7.2C4 0.8 15 0.8 15 7.2" fill="none" stroke="#222" stroke-width="1.1"/><circle cx="4" cy="7.2" r="1.9" fill="#f7d400" stroke="#3a3a2a" stroke-width="0.7"/><circle cx="15" cy="7.2" r="1.9" fill="#f7d400" stroke="#3a3a2a" stroke-width="0.7"/><circle cx="9.8" cy="15.3" r="1.9" fill="#f7d400" stroke="#3a3a2a" stroke-width="0.7"/></svg>
<svg style="left:14px;top:299px" width="18" height="18" viewBox="0 0 18 18"><path d="M2.6 3Q8 4.5 10.8 7.3Q13 9.5 14.8 15.4" fill="none" stroke="#222" stroke-width="1.1"/><circle cx="2.6" cy="3" r="1.9" fill="#f7d400" stroke="#3a3a2a" stroke-width="0.7"/><circle cx="10.8" cy="7.3" r="1.9" fill="#f7d400" stroke="#3a3a2a" stroke-width="0.7"/><circle cx="14.8" cy="15.4" r="1.9" fill="#f7d400" stroke="#3a3a2a" stroke-width="0.7"/></svg>
<svg style="left:14px;top:332px" width="18" height="18" viewBox="0 0 18 18"><circle cx="9" cy="9" r="7.3" fill="none" stroke="#333" stroke-width="1.1"/><path d="M9 9L13.9 13.6" stroke="#222"/><circle cx="9" cy="9" r="1.9" fill="#f7d400" stroke="#3a3a2a" stroke-width="0.7"/><circle cx="13.9" cy="13.6" r="1.9" fill="#f7d400" stroke="#3a3a2a" stroke-width="0.7"/></svg>
<svg style="left:14px;top:363px" width="18" height="18" viewBox="0 0 18 18"><ellipse cx="9" cy="9.5" rx="8.3" ry="3.8" transform="rotate(-38 9 9.5)" fill="none" stroke="#222" stroke-width="1.1"/><path d="M6 10H11M8.5 7.5V12.5" stroke="#111" stroke-width="1.1"/><circle cx="2.8" cy="15.3" r="1.9" fill="#f7d400" stroke="#3a3a2a" stroke-width="0.7"/><circle cx="5.9" cy="6.4" r="1.9" fill="#f7d400" stroke="#3a3a2a" stroke-width="0.7"/><circle cx="15" cy="3.3" r="1.9" fill="#f7d400" stroke="#3a3a2a" stroke-width="0.7"/></svg>
<svg style="left:14px;top:395px" width="18" height="18" viewBox="0 0 18 18"><path d="M2.8 13.6C3.5 7 8 2.5 12 3C16 3.5 15 10 10.8 13.6" fill="none" stroke="#222" stroke-width="1.1"/><path d="M7 8.5H12M9.5 6V11" stroke="#111" stroke-width="1.1"/><circle cx="2.8" cy="13.6" r="1.9" fill="#f7d400" stroke="#3a3a2a" stroke-width="0.7"/><circle cx="10.8" cy="13.6" r="1.9" fill="#f7d400" stroke="#3a3a2a" stroke-width="0.7"/></svg>
<svg style="left:14px;top:427px" width="18" height="18" viewBox="0 0 18 18"><circle cx="2.8" cy="4.3" r="1.9" fill="#f7d400" stroke="#3a3a2a" stroke-width="0.7"/><circle cx="11.8" cy="3.1" r="1.9" fill="#f7d400" stroke="#3a3a2a" stroke-width="0.7"/><circle cx="7" cy="8.5" r="1.9" fill="#f7d400" stroke="#3a3a2a" stroke-width="0.7"/><circle cx="2.8" cy="14.3" r="1.9" fill="#f7d400" stroke="#3a3a2a" stroke-width="0.7"/><circle cx="9" cy="13.5" r="1.9" fill="#f7d400" stroke="#3a3a2a" stroke-width="0.7"/><circle cx="14" cy="15.3" r="1.9" fill="#f7d400" stroke="#3a3a2a" stroke-width="0.7"/></svg>
<svg style="left:14px;top:459px" width="18" height="18" viewBox="0 0 18 18"><path d="M2.8 14.5C3 9 5 7 7 7.5C9 8 9 12 11.5 11.5C14 11 15 6 15 3.3" fill="none" stroke="#222" stroke-width="1.3"/><circle cx="2.8" cy="14.5" r="1.9" fill="#f7d400" stroke="#3a3a2a" stroke-width="0.7"/><circle cx="15" cy="3.3" r="1.9" fill="#f7d400" stroke="#3a3a2a" stroke-width="0.7"/></svg>
<svg style="left:14px;top:491px" width="18" height="18" viewBox="0 0 18 18"><defs><pattern id="hp" width="3" height="3" patternUnits="userSpaceOnUse" patternTransform="rotate(45)"><rect width="1.3" height="3" fill="#7a7a80"/></pattern></defs><rect x="1.4" y="1.6" width="15" height="14" fill="#d8d8dc"/><rect x="1.4" y="1.6" width="15" height="14" fill="url(#hp)"/></svg>
<svg style="left:14px;top:523px" width="18" height="18" viewBox="0 0 18 18"><rect x="1.5" y="2.5" width="13.5" height="13" fill="#fafafa" stroke="#aaa"/><text x="2.5" y="12" font-family="Liberation Sans" font-size="11" fill="#333">A</text><circle cx="11.5" cy="4.5" r="1.5" fill="none" stroke="#555" stroke-width="0.7"/><circle cx="12.3" cy="12.8" r="4.6" fill="#1fa81f" stroke="#118811" stroke-width="0.6"/><path d="M12.3 10.2V15.4M9.7 12.8H14.9" stroke="#fff" stroke-width="1.6"/></svg>
<svg style="left:14px;top:555px" width="18" height="18" viewBox="0 0 18 18"><path d="M4.5 3.5Q4.5 2 6 2H16.5V10L12 15.5H3Q1.5 15.5 1.5 14V6Z" fill="#f4d050" stroke="#555" stroke-width="0.9"/><path d="M5 11L6.5 6.5H12.5L12 10L9.5 8.5L7 11Z" fill="#fff" stroke="#666" stroke-width="0.8"/></svg>
<svg style="left:19px;top:585px" width="10" height="11" viewBox="0 0 10 11"><path d="M2 2L5 5L8 2M2 6L5 9L8 6" stroke="#111" stroke-width="1.6" fill="none"/></svg>
<svg style="left:795px;top:139px" width="18" height="18" viewBox="0 0 18 18"><path d="M2.5 10.5L10 2.5Q11.5 1 13 2.5L15 4.5Q16.5 6 15 7.5L7.5 15.5Z" fill="#eea0a0" stroke="#b06060" stroke-width="0.8"/><path d="M2.5 10.5L7.5 15.5L9 14L4 9Z" fill="#c87070"/><rect x="1" y="16.3" width="16" height="1.7" fill="#555"/></svg>
<svg style="left:795px;top:171px" width="18" height="18" viewBox="0 0 18 18"><rect x="1.5" y="10.5" width="6.3" height="6.5" fill="#fff" stroke="#222" stroke-width="1.1"/><rect x="10.6" y="1.5" width="6.2" height="6.5" fill="#fff" stroke="#222" stroke-width="1.1"/><path d="M6 11.5L11.5 6.5" stroke="#1a3af0" stroke-width="1.5"/><path d="M12.5 5.5L11.8 9.5L8.8 7.2Z" fill="#1a3af0"/></svg>
<svg style="left:795px;top:203px" width="18" height="18" viewBox="0 0 18 18"><path d="M8 1.5L1.5 17H8Z" fill="none" stroke="#333" stroke-width="1.1" stroke-dasharray="1.2 1.2"/><path d="M9.5 1.5L16.5 17H9.5Z" fill="#fff" stroke="#111" stroke-width="1.3"/></svg>
<svg style="left:795px;top:235px" width="18" height="18" viewBox="0 0 18 18"><rect x="1.5" y="9.5" width="6" height="6" fill="none" stroke="#555" stroke-width="1.1" stroke-dasharray="1.2 1.2"/><rect x="10.5" y="1.5" width="6" height="6" fill="#fff" stroke="#111" stroke-width="1.3"/><path d="M5 12.5L11 7" stroke="#1a3af0" stroke-width="1.5"/><path d="M12.5 5.5L11.5 9.5L8.7 7Z" fill="#1a3af0"/></svg>
<svg style="left:795px;top:267px" width="18" height="18" viewBox="0 0 18 18"><path d="M1 4.5H16.5V9.5L11 15" fill="none" stroke="#111" stroke-width="1.3"/><path d="M1 7.5H13.5V10L8 15.5" fill="none" stroke="#777" stroke-width="1.1" stroke-dasharray="1.3 1.3"/></svg>
<svg style="left:795px;top:299px" width="18" height="18" viewBox="0 0 18 18"><rect x="1.5" y="2.5" width="3" height="3" fill="#fff" stroke="#111" stroke-width="1.1"/><rect x="7.5" y="2.5" width="3" height="3" fill="#fff" stroke="#111" stroke-width="1.1"/><rect x="13.5" y="2.5" width="3" height="3" fill="#fff" stroke="#111" stroke-width="1.1"/><rect x="1.5" y="8.5" width="3" height="3" fill="#fff" stroke="#111" stroke-width="1.1"/><rect x="7.5" y="8.5" width="3" height="3" fill="#fff" stroke="#111" stroke-width="1.1"/><rect x="13.5" y="8.5" width="3" height="3" fill="#fff" stroke="#111" stroke-width="1.1"/><rect x="1.5" y="14.5" width="3" height="3" fill="#c8c8c8" stroke="#777" stroke-width="1.1"/><rect x="7.5" y="14.5" width="3" height="3" fill="#fff" stroke="#111" stroke-width="1.1"/><rect x="13.5" y="14.5" width="3" height="3" fill="#fff" stroke="#111" stroke-width="1.1"/></svg>
<svg style="left:795px;top:331px" width="18" height="18" viewBox="0 0 18 18"><rect x="1.5" y="7.5" width="7" height="7" fill="none" stroke="#555" stroke-width="1.1" stroke-dasharray="1.3 1.3"/><path d="M8.5 10.5L12 7L15.5 10.5L12 14Z" fill="#fff" stroke="#111" stroke-width="1.3"/><path d="M6 6C6 2 11 1 12.5 4.5" fill="none" stroke="#1a3af0" stroke-width="1.4"/><path d="M10.5 4L14 6.5L14 2.5Z" fill="#1a3af0"/></svg>
<svg style="left:795px;top:363px" width="18" height="18" viewBox="0 0 18 18"><path d="M1.5 5V1.5H16.5V16.5H9" fill="none" stroke="#111" stroke-width="1.4"/><rect x="1.5" y="9.5" width="7" height="7" fill="none" stroke="#666" stroke-width="1.1" stroke-dasharray="1.3 1.3"/><path d="M7.5 10L14 3.5" stroke="#1a3af0" stroke-width="1.5"/><path d="M15 2.5L14 7L10.5 4Z" fill="#1a3af0"/></svg>
<svg style="left:795px;top:395px" width="18" height="18" viewBox="0 0 18 18"><path d="M1.5 1.5H6.5V10.5H16.5V16.5H1.5Z" fill="#c4c4bc" stroke="#222" stroke-width="1"/><rect x="7" y="11" width="9" height="5" fill="#fff"/><path d="M8 13.5H14" stroke="#1a3af0" stroke-width="1.4"/><path d="M15.5 13.5L12.5 11.5V15.5Z" fill="#1a3af0"/></svg>
<svg style="left:795px;top:427px" width="18" height="18" viewBox="0 0 18 18"><path d="M1 4.5H7" stroke="#111" stroke-width="1.8"/><path d="M7 4.5L13.5 11" stroke="#2a7ae0" stroke-width="1.8"/><path d="M13.5 11V18" stroke="#111" stroke-width="1.8"/></svg>
<svg style="left:795px;top:459px" width="18" height="18" viewBox="0 0 18 18"><path d="M1 3.5H6" stroke="#111" stroke-width="1.8"/><path d="M6 3.5Q13 3.5 13.5 10" fill="none" stroke="#2a7ae0" stroke-width="1.8"/><path d="M13.5 10V17" stroke="#111" stroke-width="1.8"/><path d="M5 10.5H10M7.5 8V13" stroke="#111" stroke-width="1.2"/></svg>
<svg style="left:795px;top:491px" width="18" height="18" viewBox="0 0 18 18"><path d="M13.5 2.5H7Q2 2.5 2 9Q2 15.5 7 15.5H14V9.5" fill="none" stroke="#222" stroke-width="1.3"/><circle cx="14" cy="6.5" r="1.6" fill="#2a7ae0"/></svg>
<svg style="left:795px;top:523px" width="18" height="18" viewBox="0 0 18 18"><path d="M13.5 2.5H7Q2 2.5 2 9Q2 15.5 7 15.5H14V13" fill="none" stroke="#222" stroke-width="1.3"/><circle cx="14" cy="6" r="1.5" fill="#2a7ae0"/><circle cx="14" cy="10" r="1.5" fill="#2a7ae0"/></svg>
<svg style="left:795px;top:555px" width="18" height="18" viewBox="0 0 18 18"><path d="M1 9H7M17 9H11" stroke="#1a6ae0" stroke-width="1.6"/><path d="M8 9L4.5 5.5V12.5ZM10 9L13.5 5.5V12.5Z" fill="#1a6ae0"/></svg>
<svg style="left:800px;top:585px" width="10" height="11" viewBox="0 0 10 11"><path d="M2 2L5 5L8 2M2 6L5 9L8 6" stroke="#111" stroke-width="1.6" fill="none"/></svg>




<!-- tabs -->
<svg style="left:0;top:0" width="829" height="638" viewBox="0 0 829 638">
<path d="M118.5 500L123.5 515.5Q124.3 517.5 126.5 517.5H184Q186.2 517.5 187 515.5L192.3 500" fill="none" stroke="#3a3a3a" stroke-width="1"/>
<path d="M193.5 500L198.5 515.5Q199.3 517.5 201.5 517.5H259Q261.2 517.5 262 515.5L267.5 500" fill="none" stroke="#3a3a3a" stroke-width="1"/>
<path d="M41.5 499L48.8 516Q49.8 518.5 52.5 518.5H106Q108.7 518.5 109.7 516L117.3 499" fill="#fff" stroke="#2a2a2a" stroke-width="1"/>
</svg>
<div class="ui" style="left:54px;top:501px;font-size:14px;letter-spacing:0.8px">Modelo</div>
<div class="ui" style="left:131px;top:500px;font-size:14px;letter-spacing:0.6px">Sheet1</div>
<div class="ui" style="left:207px;top:500px;font-size:14px;letter-spacing:0.6px">Sheet2</div>
<!-- splitter grip -->

<!-- command window -->
<div class="ui" style="left:43px;top:530px;letter-spacing:0.58px">Janela de comandos</div>
<svg style="left:755px;top:532px" width="30" height="12" viewBox="0 0 30 12">
<rect x="0.5" y="0.5" width="10.5" height="10.5" rx="1" fill="none" stroke="#5a5856" stroke-width="1.1"/>
<rect x="4.5" y="2.5" width="4" height="4" rx="0.8" fill="none" stroke="#555" stroke-width="1"/><rect x="2.5" y="4.5" width="4" height="4" rx="0.8" fill="#f0f0f0" stroke="#555" stroke-width="1"/>
<rect x="17.5" y="0.5" width="10.5" height="10.5" rx="1" fill="none" stroke="#5a5856" stroke-width="1.1"/>
<path d="M20.3 3.3L25.2 8.2M25.2 3.3L20.3 8.2" stroke="#5c5c5c" stroke-width="1.8"/>
</svg>
<div class="a" style="left:41px;top:550px;width:745px;height:48px;background:#fff"></div>
<div class="a" style="left:41px;top:550px;width:727px;height:33px;background:#fff;border:1px solid #8c8a86;border-right-color:#9a9894"></div>
<div class="a" style="left:46px;top:548px;font-size:13.25px;color:#111;white-space:nowrap;line-height:16px">Salvamento automático em /tmp/DraftSight_humberto_autosave/Teste0_1369.ds$</div>
<div class="a" style="left:770px;top:550px;width:16px;height:33px;background:#edeceb"></div>
<div class="a" style="left:771px;top:550px;width:15px;height:33px;border:1px solid #8e8c88;border-radius:4px;background:linear-gradient(#fdfdfd,#eeeeed)"></div>
<div class="a" style="left:772px;top:565px;width:13px;height:3px;background:#a8c0e8;border-top:1px solid #7a96c8"></div>
<svg style="left:772px;top:551px" width="14" height="31" viewBox="0 0 14 31"><path d="M3.5 9L7 5.5L10.5 9" stroke="#222" stroke-width="1.5" fill="none"/><path d="M3.5 22L7 25.5L10.5 22" stroke="#aaa" stroke-width="1.2" fill="none"/><path d="M1 14.5H13M1 17.5H13" stroke="#9a9894" stroke-width="0.8"/></svg>
<div class="a" style="left:44.5px;top:582px;font-size:14px;color:#111;line-height:16px">:</div>
<div class="a" style="left:52px;top:583px;width:1px;height:14px;background:#111"></div>
<!-- status bar -->
<div class="a sb" style="left:211px;top:604px;width:48px">Snap</div>
<div class="a sb" style="left:267px;top:604px;width:53px">Grade</div>
<div class="a sb" style="left:329px;top:604px;width:46px">Orto</div>
<div class="a sb on" style="left:387px;top:604px;width:50px">Polar</div>
<div class="a sb on" style="left:446px;top:604px;width:56px">ESnap</div>
<div class="a sb on" style="left:511px;top:604px;width:82px">ERastrear</div>
<div class="ui" style="left:603px;top:608px;letter-spacing:0.47px">(47.127,77.8,0)</div>
<svg style="left:810px;top:619px" width="12" height="12"><g fill="#a8a6a2"><rect x="9" y="0" width="1" height="1"/><rect x="6" y="3" width="1" height="1"/><rect x="9" y="3" width="1" height="1"/><rect x="3" y="6" width="1" height="1"/><rect x="6" y="6" width="1" height="1"/><rect x="9" y="6" width="1" height="1"/><rect x="0" y="9" width="1" height="1"/><rect x="3" y="9" width="1" height="1"/><rect x="6" y="9" width="1" height="1"/><rect x="9" y="9" width="1" height="1"/></g></svg>


<!-- watermark -->
<svg style="left:0;top:0" width="829" height="638" viewBox="0 0 829 638">
<defs><filter id="wb" x="-10%" y="-10%" width="120%" height="120%"><feGaussianBlur stdDeviation="1.2"/></filter></defs>
<g transform="translate(661,627) rotate(-40)" font-family="Liberation Sans" font-weight="bold" fill="#000" fill-opacity="0.09" filter="url(#wb)">
<text x="0" y="0" font-size="42" transform="skewX(-8)">ALL-</text>
<text x="96" y="-19" font-size="18" transform="skewX(-8)">FREE</text>
<text x="98" y="-2" font-size="18" transform="skewX(-8)">LOAD</text>
<text x="150" y="-4" font-size="11" transform="skewX(-8)">.NET</text>

</g>
<g transform="translate(660,626) rotate(-40)" font-family="Liberation Sans" font-weight="bold" fill="#fff" fill-opacity="0.3">
<text x="0" y="0" font-size="42" transform="skewX(-8)">ALL-</text>
<text x="96" y="-19" font-size="18" transform="skewX(-8)">FREE</text>
<text x="98" y="-2" font-size="18" transform="skewX(-8)">LOAD</text>
<text x="150" y="-4" font-size="11" transform="skewX(-8)">.NET</text>

</g>
<path d="M703 548C703 527 717 513 735 510L733 502L752 514L738 524L737 518C721 521 712 533 712 548Z" fill="#000" fill-opacity="0.07" filter="url(#wb)"/>
<path d="M702 547C702 526 716 512 734 509L732 501L751 513L737 523L736 517C720 520 711 532 711 547Z" fill="#fff" fill-opacity="0.3"/>
</svg>

<!-- status separator -->
<div class="a" style="left:5px;top:598px;width:818px;height:1px;background:#c2c0bc"></div>
<div class="a" style="left:5px;top:599px;width:818px;height:1px;background:#fdfdfd"></div>

</body></html>
